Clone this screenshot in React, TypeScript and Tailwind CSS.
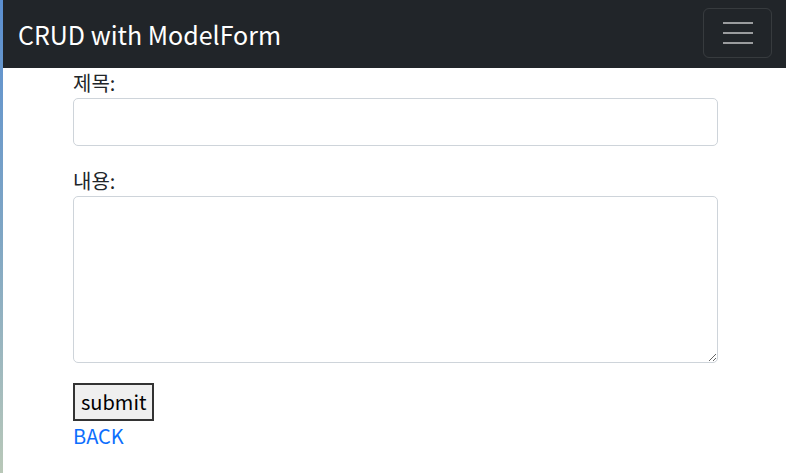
import React, { useState } from "react";

const App: React.FC = () => {
  const [title, setTitle] = useState<string>("");
  const [content, setContent] = useState<string>("");

  return (
    <div
      className="flex min-h-screen bg-white text-[#212529]"
      style={{ fontFamily: '"Noto Sans CJK KR", "Noto Sans", sans-serif' }}
    >
      {/* desktop peeking through on the left */}
      <div className="w-[3px] shrink-0 bg-gradient-to-b from-[#5b8fd0] via-[#7fa6c4] to-[#b9c8b8]" />

      <div className="flex flex-1 flex-col">
        <nav className="flex h-[68px] items-center justify-between bg-[#212529] pl-[15px] pr-[14px]">
          <a href="#" className="text-[25px] leading-none text-white">
            CRUD with ModelForm
          </a>
          <button className="mb-[2px] flex h-[50px] w-[69px] flex-col items-center justify-center gap-[8px] rounded-[6px] border border-white/10">
            <span className="block h-[2px] w-[30px] bg-[#9a9c9e]" />
            <span className="block h-[2px] w-[30px] bg-[#9a9c9e]" />
            <span className="block h-[2px] w-[30px] bg-[#9a9c9e]" />
          </button>
        </nav>

        <form className="ml-[70px] flex w-[645px] flex-col text-[20px]">
          <label className="block leading-[30px]">제목:</label>
          <input
            type="text"
            value={title}
            onChange={(e) => setTitle(e.target.value)}
            className="h-[48px] w-full rounded-[5px] border border-[#ced4da] px-3 outline-none"
          />

          <label className="mt-[20px] block leading-[30px]">내용:</label>
          <textarea
            value={content}
            onChange={(e) => setContent(e.target.value)}
            className="h-[167px] w-full rounded-[5px] border border-[#ced4da] px-3 outline-none"
          />

          <div className="mt-[20px]">
            <button
              type="button"
              className="h-[38px] border-2 border-[#333] bg-[#efefef] px-[6px] text-[20px] leading-none text-black"
            >
              submit
            </button>
          </div>
          <a href="#" className="block leading-[30px] text-[#0d6efd]">
            BACK
          </a>
        </form>
      </div>
    </div>
  );
};

export default App;
